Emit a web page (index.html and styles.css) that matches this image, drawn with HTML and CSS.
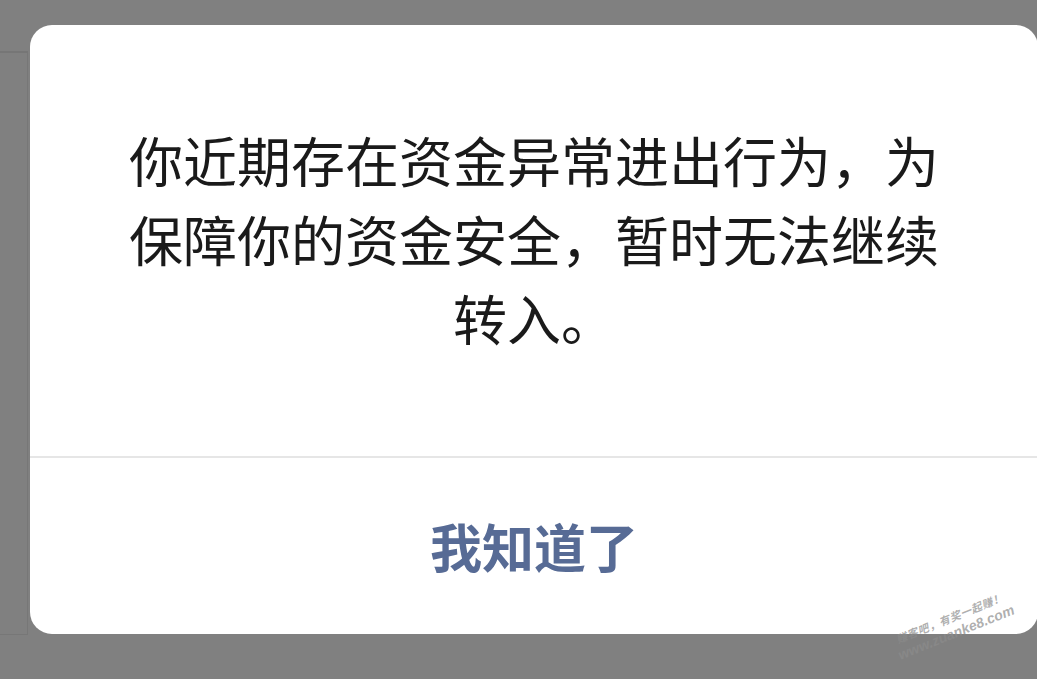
FILE: index.html
```html
<!DOCTYPE html>
<html lang="zh-CN">
<head>
  <meta charset="UTF-8">
  <meta name="viewport" content="width=device-width, initial-scale=1.0">
  <title>提示</title>
  <link rel="stylesheet" href="styles.css">
</head>
<body>
  <div class="backdrop-edge"></div>

  <div class="dialog">
    <div class="dialog-body">
      <p class="message">你近期存在资金异常进出行为，为保障你的资金安全，暂时无法继续转入。</p>
    </div>
    <div class="dialog-footer">
      <button class="confirm">我知道了</button>
    </div>
  </div>

  <div class="watermark">
    <span class="wm-top">赚客吧，有奖一起赚！</span>
    <span class="wm-bottom">www.zuanke8.com</span>
  </div>
</body>
</html>
```

FILE: styles.css
```css
* {
  margin: 0;
  padding: 0;
  box-sizing: border-box;
}

body {
  background: #808080;
  width: 1037px;
  height: 679px;
  overflow: hidden;
  position: relative;
  font-family: "Noto Sans CJK SC", "Noto Sans", sans-serif;
}

/* faint edge of the page behind the dialog */
.backdrop-edge {
  position: absolute;
  left: 0;
  top: 51px;
  width: 28px;
  height: 584px;
  border-top: 2px solid #767676;
  border-right: 1px solid #777777;
  border-bottom: 1px solid #777777;
}

.dialog {
  position: relative;
  margin: 25px 0 0 30px;
  width: 1008px;
  height: 609px;
  background: #ffffff;
  border-radius: 22px;
  display: flex;
  flex-direction: column;
  overflow: hidden;
}

.dialog-body {
  height: 433px;
  display: flex;
  align-items: center;
  justify-content: center;
  padding: 0 96px 4px 96px;
  border-bottom: 2px solid #e6e6e6;
}

.message {
  width: 812px;
  text-align: center;
  font-size: 54px;
  line-height: 79px;
  color: #1a1a1a;
}

.dialog-footer {
  flex: 1;
  display: flex;
  align-items: center;
  justify-content: center;
  padding-bottom: 2px;
}

.confirm {
  border: none;
  background: none;
  font-family: "Noto Sans CJK SC", "Noto Sans", sans-serif;
  font-size: 52px;
  font-weight: 700;
  color: #576b95;
  cursor: pointer;
}

.watermark {
  position: absolute;
  left: 890px;
  top: 634px;
  display: flex;
  flex-direction: column;
  transform: rotate(-22deg);
  transform-origin: left top;
  color: rgba(140, 140, 140, 0.7);
  font-weight: 700;
  font-style: italic;
  white-space: nowrap;
}

.wm-top {
  font-size: 11px;
  line-height: 15px;
  padding-left: 4px;
  letter-spacing: 0.5px;
}

.wm-bottom {
  font-family: "Liberation Sans", sans-serif;
  font-size: 14px;
  line-height: 16px;
}
```
